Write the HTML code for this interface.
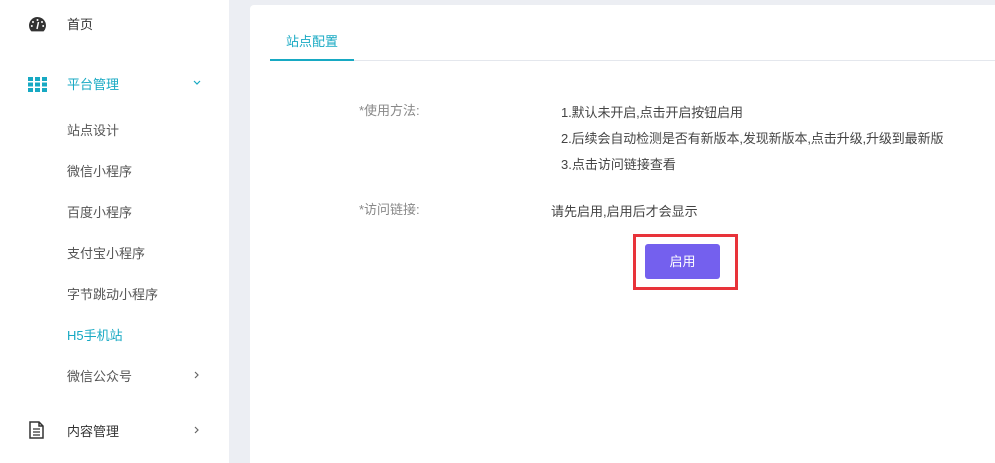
<!DOCTYPE html>
<html><head><meta charset="utf-8"><style>
*{margin:0;padding:0;box-sizing:border-box}
html,body{width:995px;height:463px;overflow:hidden}
body{background:#eceef3;font-family:"Liberation Sans","Noto Sans CJK SC",sans-serif;font-size:13px;color:#333;position:relative}
.side{position:absolute;left:0;top:0;width:229px;height:463px;background:#fff}
.it{position:absolute;left:67px;font-size:13px;color:#333}
.sub{color:#555}
.ic{position:absolute;left:28px}
.card{position:absolute;left:250px;top:5px;width:745px;height:458px;background:#fff;border-radius:4px 0 0 0}
.t{position:absolute;font-size:13px}
.ch{position:absolute;left:193px;color:#666;font-size:13px}
</style></head><body>
<div class="side">
<svg class="ic" style="top:16px" width="19" height="16" viewBox="0 0 19 16"><path d="M9.5 1A8.5 8.5 0 0 0 1 9.5c0 2.3 .9 4.4 2.4 5.9h12.2A8.5 8.5 0 0 0 9.5 1z" fill="#333"/><circle cx="9.5" cy="4" r="1" fill="#fff"/><circle cx="5" cy="6" r="1" fill="#fff"/><circle cx="14" cy="6" r="1" fill="#fff"/><circle cx="3.8" cy="10" r="1" fill="#fff"/><circle cx="15.2" cy="10" r="1" fill="#fff"/><path d="M9 13l1.5-7" stroke="#fff" stroke-width="1.5"/></svg>
<div class="it" style="top:14px">首页</div>
<svg class="ic" style="top:77px" width="19" height="15" viewBox="0 0 19 15" fill="#17a9c3"><rect x="0" y="0" width="5" height="4"/><rect x="7" y="0" width="5" height="4"/><rect x="14" y="0" width="5" height="4"/><rect x="0" y="5.5" width="5" height="4"/><rect x="7" y="5.5" width="5" height="4"/><rect x="14" y="5.5" width="5" height="4"/><rect x="0" y="11" width="5" height="4"/><rect x="7" y="11" width="5" height="4"/><rect x="14" y="11" width="5" height="4"/></svg>
<div class="it" style="top:74px;color:#17a9c3">平台管理</div>
<svg style="position:absolute;left:193px;top:80px" width="8" height="5" viewBox="0 0 8 5"><path d="M1 1l3 3 3-3" fill="none" stroke="#17a9c3" stroke-width="1.2"/></svg>
<div class="it sub" style="top:120px">站点设计</div>
<div class="it sub" style="top:161px">微信小程序</div>
<div class="it sub" style="top:202px">百度小程序</div>
<div class="it sub" style="top:243px">支付宝小程序</div>
<div class="it sub" style="top:284px">字节跳动小程序</div>
<div class="it" style="top:325px;color:#17a9c3">H5手机站</div>
<div class="it sub" style="top:366px">微信公众号</div>
<svg style="position:absolute;left:194px;top:371px" width="5" height="8" viewBox="0 0 5 8"><path d="M1 1l3 3-3 3" fill="none" stroke="#666" stroke-width="1.2"/></svg>
<svg class="ic" style="top:421px;left:29px" width="15" height="18" viewBox="0 0 15 18"><path d="M1 1h9l4 4v12H1z M10 1v4h4" fill="none" stroke="#333" stroke-width="1.5"/><path d="M4 8h7M4 11h7M4 14h7" stroke="#333" stroke-width="1.3"/></svg>
<div class="it" style="top:421px">内容管理</div>
<svg style="position:absolute;left:194px;top:426px" width="5" height="8" viewBox="0 0 5 8"><path d="M1 1l3 3-3 3" fill="none" stroke="#666" stroke-width="1.2"/></svg>
</div>
<div class="card">
<div class="t" style="left:36px;top:26px;color:#17a9c3">站点配置</div>
<div style="position:absolute;left:20px;top:55px;width:760px;height:1px;background:#e4e7ed"></div>
<div style="position:absolute;left:20px;top:54px;width:84px;height:2px;background:#17a9c3"></div>
<div class="t" style="left:109px;top:95px;color:#888">*使用方法:</div>
<div class="t" style="left:311px;top:97px;color:#444;letter-spacing:-0.1px">1.默认未开启,点击开启按钮启用</div>
<div class="t" style="left:311px;top:123px;color:#444;letter-spacing:-0.1px">2.后续会自动检测是否有新版本,发现新版本,点击升级,升级到最新版</div>
<div class="t" style="left:311px;top:149px;color:#444">3.点击访问链接查看</div>
<div class="t" style="left:109px;top:194px;color:#888">*访问链接:</div>
<div class="t" style="left:301px;top:196px;color:#444">请先启用,启用后才会显示</div>
<div style="position:absolute;left:383px;top:229px;width:105px;height:56px;border:3px solid #e8333a"></div>
<div style="position:absolute;left:395px;top:239px;width:75px;height:35px;background:#7460ee;border-radius:3px;color:#fff;text-align:center;line-height:35px">启用</div>
</div>
</body></html>
